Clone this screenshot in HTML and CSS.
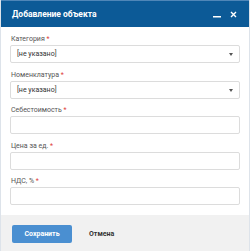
FILE: index.html
```html
<!DOCTYPE html>
<html lang="ru">
<head>
  <meta charset="UTF-8">
  <title>Добавление объекта</title>
  <link rel="stylesheet" href="styles.css">
</head>
<body>
  <div class="dialog">
    <div class="header">
      <span class="title">Добавление объекта</span>
      <div class="tools">
        <svg class="tool" width="8" height="8" viewBox="0 0 8 8"><rect x="0" y="6" width="8" height="1.5" fill="#fff"/></svg>
        <svg class="tool" width="7" height="7" viewBox="0 0 7 7"><path d="M1 1 L6 6 M6 1 L1 6" stroke="#fff" stroke-width="1.4"/></svg>
      </div>
    </div>

    <div class="body">
      <div class="field">
        <label>Категория <span class="req">*</span></label>
        <div class="select">[не указано]<span class="arrow"></span></div>
      </div>
      <div class="field">
        <label>Номенклатура <span class="req">*</span></label>
        <div class="select">[не указано]<span class="arrow"></span></div>
      </div>
      <div class="field">
        <label>Себестоимость <span class="req">*</span></label>
        <input type="text">
      </div>
      <div class="field">
        <label>Цена за ед. <span class="req">*</span></label>
        <input type="text">
      </div>
      <div class="field">
        <label>НДС, % <span class="req">*</span></label>
        <input type="text">
      </div>
    </div>

    <div class="footer">
      <button class="save">Сохранить</button>
      <button class="cancel">Отмена</button>
    </div>
  </div>
</body>
</html>
```

FILE: styles.css
```css
* {
  font-family: Roboto, 'Liberation Sans', sans-serif;
  box-sizing: border-box;
}

body {
  margin: 0;
  background-color: #ffffff;
}

.dialog {
  width: 250px;
  height: 251px;
  display: flex;
  flex-direction: column;
  border-left: 1px solid #dde3ea;
  border-right: 1px solid #dde3ea;
}

.header {
  height: 27px;
  background-color: #0c5a97;
  border-top: 1px solid #4f86b8;
  color: #ffffff;
  display: flex;
  align-items: center;
  justify-content: space-between;
  padding: 0 12px 0 11px;
}

.title {
  font-size: 8.5px;
  font-weight: bold;
}

.tools {
  display: flex;
  align-items: center;
  gap: 9px;
}

.body {
  flex: 1;
  padding: 8px 9px 0 9px;
  display: flex;
  flex-direction: column;
  gap: 7.5px;
}

.field {
  display: flex;
  flex-direction: column;
  gap: 2px;
}

.field label {
  font-size: 7px;
  line-height: 8px;
  color: #555555;
  padding-left: 1px;
}

.req {
  color: #e0403a;
}

.select,
.field input {
  height: 18px;
  width: 100%;
  border: 1px solid #dcdcdc;
  border-radius: 2px;
  background-color: #ffffff;
  margin: 0;
  outline: none;
}

.select {
  position: relative;
  font-size: 7px;
  line-height: 16px;
  color: #333333;
  padding-left: 6px;
}

.arrow {
  position: absolute;
  right: 6px;
  top: 7px;
  width: 0;
  height: 0;
  border-left: 2px solid transparent;
  border-right: 2px solid transparent;
  border-top: 3px solid #555555;
}

.footer {
  height: 36px;
  background-color: #f1f1f1;
  display: flex;
  align-items: flex-start;
  gap: 17px;
  padding: 10px 11px 0 11px;
}

.footer button {
  height: 18px;
  border: none;
  font-size: 7px;
  font-weight: bold;
  cursor: pointer;
}

.save {
  width: 60px;
  background-color: #4a8fd1;
  color: #ffffff;
  border-radius: 2px;
}

.cancel {
  background: none;
  color: #333333;
  padding: 0;
}
```
